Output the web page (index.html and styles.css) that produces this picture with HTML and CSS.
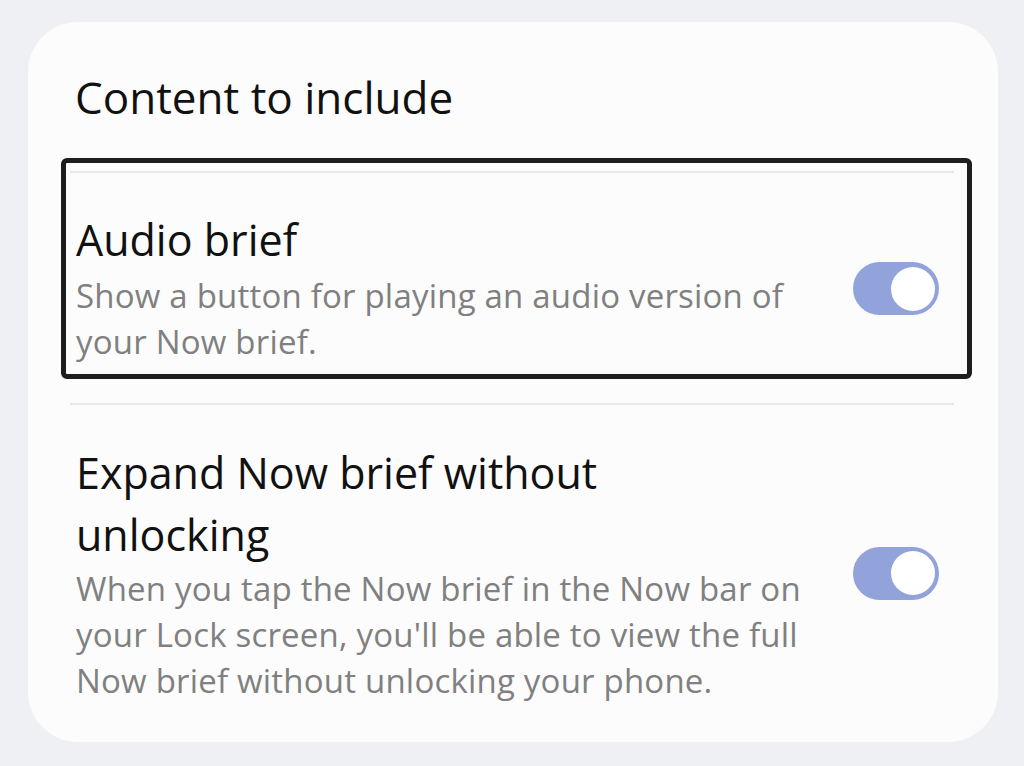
FILE: index.html
```html
<!DOCTYPE html>
<html lang="en">
<head>
<meta charset="utf-8">
<title>Content to include</title>
<link rel="stylesheet" href="styles.css">
</head>
<body>
  <section class="card">
    <h2 class="card-title">Content to include</h2>

    <div class="row row-focused">
      <div class="divider"></div>
      <div class="row-body">
        <div class="row-text">
          <div class="row-title">Audio brief</div>
          <div class="row-desc">Show a button for playing an audio version of your Now brief.</div>
        </div>
        <span class="switch" role="switch" aria-checked="true"><span class="knob"></span></span>
      </div>
    </div>

    <div class="row row-plain">
      <div class="divider"></div>
      <div class="row-body">
        <div class="row-text">
          <div class="row-title">Expand Now brief without unlocking</div>
          <div class="row-desc">When you tap the Now brief in the Now bar on your Lock screen, you'll be able to view the full Now brief without unlocking your phone.</div>
        </div>
        <span class="switch" role="switch" aria-checked="true"><span class="knob"></span></span>
      </div>
    </div>
  </section>
</body>
</html>
```

FILE: styles.css
```css
html, body {
  margin: 0;
  padding: 0;
}

body {
  background: #eff0f4;
  font-family: "Open Sans", "Noto Sans", sans-serif;
  width: 1024px;
  height: 766px;
  overflow: hidden;
}

.card {
  box-sizing: border-box;
  margin: 22px 26px 0 28px;
  height: 720px;
  background: #fcfcfc;
  border-radius: 50px;
  padding: 49px 26px 0 33px;
}

.card-title {
  margin: 0 0 35px 14px;
  font-size: 44px;
  font-weight: 400;
  line-height: 52px;
  color: #111;
}

/* Each row: a divider on top, then text and a switch */
.row {
  border: 5px solid transparent;
  border-radius: 6px;
  padding: 0 13px 0 4px;
}

.row-focused {
  border-color: #1e1e1e;
}

.row-plain {
  margin-top: 11px;
}

.divider {
  height: 2px;
  margin-top: 8px;
  background: #e8e8e8;
}

.row-body {
  display: flex;
  align-items: center;
  padding: 37px 15px 0 6px;
}

.row-focused .row-body {
  padding-top: 39px;
  padding-bottom: 9px;
}

.row-text {
  flex: none;
  width: 742px;
}

.row-title {
  max-width: 700px;
  font-size: 43px;
  line-height: 62px;
  color: #111;
}

.row-focused .row-title {
  line-height: 56px;
  margin-bottom: 5px;
}

.row-desc {
  font-size: 33px;
  line-height: 46px;
  letter-spacing: 0.2px;
  color: #808080;
}

.switch {
  position: relative;
  flex: none;
  margin-left: auto;
  width: 86px;
  height: 53px;
  border-radius: 27px;
  background: #92a3dc;
}

.knob {
  position: absolute;
  top: 4.5px;
  right: 4.5px;
  width: 44px;
  height: 44px;
  border-radius: 50%;
  background: #ffffff;
}
```
